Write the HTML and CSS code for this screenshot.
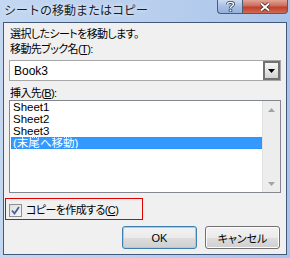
FILE: index.html
```html
<!DOCTYPE html>
<html lang="ja">
<head>
    <meta charset="UTF-8">
    <title>シートの移動またはコピー</title>
    <link rel="stylesheet" href="styles.css">
</head>
<body>
    <div class="window">
        <!-- Заголовок окна -->
        <div class="titlebar">
            <span class="title">シートの移動またはコピー</span>
            <div class="caption-buttons">
                <div class="cap-btn help">
                    <svg width="9" height="11" viewBox="0 0 9 11">
                        <path d="M1.5 3.2 C1.5 0.8 7.5 0.8 7.5 3.2 C7.5 5 4.5 5 4.5 7" fill="none" stroke="#3d4a5c" stroke-width="3"/>
                        <path d="M1.5 3.2 C1.5 0.8 7.5 0.8 7.5 3.2 C7.5 5 4.5 5 4.5 7" fill="none" stroke="#fff" stroke-width="1.4"/>
                        <rect x="3.2" y="8.2" width="2.6" height="2.6" fill="#fff" stroke="#3d4a5c" stroke-width="0.8"/>
                    </svg>
                </div>
                <div class="cap-btn close">
                    <svg width="12" height="10" viewBox="0 0 12 10">
                        <path d="M2 1.5 L10 8.5 M10 1.5 L2 8.5" stroke="#4a2a26" stroke-width="3.6"/>
                        <path d="M2 1.5 L10 8.5 M10 1.5 L2 8.5" stroke="#fff" stroke-width="1.8"/>
                    </svg>
                </div>
            </div>
        </div>

        <!-- Содержимое диалога -->
        <div class="client">
            <p class="text first">選択したシートを移動します。</p>
            <p class="text">移動先ブック名(<u>T</u>):</p>

            <div class="combo">
                <span class="combo-value">Book3</span>
                <span class="combo-btn">
                    <svg width="7" height="4" viewBox="0 0 7 4"><path d="M0 0 H7 L3.5 4 Z" fill="#000"/></svg>
                </span>
            </div>

            <p class="text label">挿入先(<u>B</u>):</p>

            <div class="listbox">
                <ul class="items">
                    <li>Sheet1</li>
                    <li>Sheet2</li>
                    <li>Sheet3</li>
                    <li class="selected">(末尾へ移動)</li>
                </ul>
                <div class="scrollbar">
                    <svg width="7" height="4" viewBox="0 0 7 4"><path d="M0 4 H7 L3.5 0 Z" fill="#a3a3a3"/></svg>
                    <svg width="7" height="4" viewBox="0 0 7 4"><path d="M0 0 H7 L3.5 4 Z" fill="#a3a3a3"/></svg>
                </div>
            </div>

            <div class="check-row">
                <span class="checkbox">
                    <svg width="9" height="9" viewBox="0 0 9 9"><path d="M1 4.5 L3.5 7.5 L8 1" fill="none" stroke="#4a5f97" stroke-width="1.8"/></svg>
                </span>
                <span class="text">コピーを作成する(<u>C</u>)</span>
            </div>

            <div class="actions">
                <button class="btn default">OK</button>
                <button class="btn">キャンセル</button>
            </div>
        </div>
    </div>
</body>
</html>
```

FILE: styles.css
```css
/* Основа */
body {
    margin: 0;
    font-family: "Liberation Sans", "Noto Sans CJK JP", sans-serif;
    font-size: 12px;
    color: #000;
}

/* Окно */
.window {
    width: 290px;
    height: 258px;
    box-sizing: border-box;
    display: flex;
    flex-direction: column;
    background: linear-gradient(to right, #c3d7f1, #b9cfee 50%, #a9c4ea);
}

.titlebar {
    height: 22px;
    display: flex;
    justify-content: space-between;
    align-items: flex-start;
}

.title {
    font-family: "Noto Sans CJK JP", sans-serif;
    font-size: 12px;
    line-height: 20px;
    padding-left: 4px;
    color: #1b1b1b;
    text-shadow: 0 0 4px rgba(255, 255, 255, 0.9);
}

.caption-buttons {
    display: flex;
    margin-right: 2px;
}

.cap-btn {
    height: 13px;
    display: flex;
    align-items: center;
    justify-content: center;
    border: 1px solid #4e5d73;
    border-top: none;
}

.help {
    width: 24px;
    border-radius: 0 0 0 4px;
    border-right: none;
    background: linear-gradient(#cddcf0, #a6bfe2 50%, #94b1dc);
}

.close {
    width: 44px;
    border-radius: 0 0 4px 0;
    background: linear-gradient(#dfa597, #cf6b5b 45%, #c0402c 55%, #cf6a50);
}

/* Клиентская область */
.client {
    flex: 1;
    margin: 0 3px 3px;
    border: 1px solid #43597a;
    background: #f0f0f0;
    padding: 4px 5px 0;
    display: flex;
    flex-direction: column;
}

.text {
    margin: 0;
    padding-left: 1px;
    font-size: 11px;
    line-height: 15px;
    letter-spacing: -0.6px;
    font-feature-settings: "palt";
}

.text u {
    text-underline-offset: 1px;
}

.combo {
    margin-top: 3px;
    height: 21px;
    box-sizing: border-box;
    border: 1px solid #a7a7a7;
    background: #fff;
    display: flex;
    align-items: center;
    justify-content: space-between;
}

.combo-value {
    padding-left: 4px;
}

.combo-btn {
    width: 17px;
    height: 19px;
    box-sizing: border-box;
    border: 2px solid #727272;
    background: linear-gradient(#f4f4f4, #e6e6e6 50%, #d2d2d2);
    display: flex;
    align-items: center;
    justify-content: center;
}

.label {
    margin-top: 5px;
    line-height: 14px;
}

/* Список листов */
.listbox {
    height: 93px;
    box-sizing: border-box;
    border: 1px solid #828790;
    background: #fff;
    display: flex;
}

.items {
    flex: 1;
    margin: 0;
    padding: 0 0 0 1px;
    list-style: none;
}

.items li {
    height: 12px;
    font-size: 11.5px;
    line-height: 12px;
    padding-left: 2px;
    font-feature-settings: "palt";
}

.items .selected {
    background: #3399ff;
    color: #fff;
    box-sizing: border-box;
    outline: 1px dotted #c56a1c;
    outline-offset: -1px;
}

.scrollbar {
    width: 17px;
    background: #ededed;
    border-left: 1px solid #e2e2e2;
    display: flex;
    flex-direction: column;
    justify-content: space-between;
    align-items: center;
    padding: 7px 0 6px;
}

/* Флажок */
.check-row {
    margin: 5px 0 0 -4px;
    width: 138px;
    height: 22px;
    box-sizing: border-box;
    border: 1px solid #e00000;
    display: flex;
    align-items: center;
    gap: 4px;
    padding: 2px 0 0 3px;
}

.checkbox {
    width: 13px;
    height: 13px;
    box-sizing: border-box;
    border: 1px solid #8e8f8f;
    background: linear-gradient(135deg, #e0e0e0, #f6f6f6);
    display: flex;
    align-items: center;
    justify-content: center;
}

.check-row .text {
    padding-left: 0;
}

/* Кнопки */
.actions {
    margin-top: 6px;
    display: flex;
    justify-content: flex-end;
    gap: 8px;
    padding-right: 1px;
}

.btn {
    width: 75px;
    height: 23px;
    padding: 0;
    font-family: "Liberation Sans", "Noto Sans CJK JP", sans-serif;
    font-size: 11px;
    font-feature-settings: "palt";
    color: #000;
    border: 1px solid #707070;
    border-radius: 3px;
    background: linear-gradient(#f2f2f2, #ebebeb 50%, #dddddd 51%, #cfcfcf);
    box-shadow: inset 0 0 0 1px #fcfcfc;
}

.btn.default {
    border-color: #3c7fb1;
    box-shadow: inset 0 0 0 1px #8fd6f5;
}
```
